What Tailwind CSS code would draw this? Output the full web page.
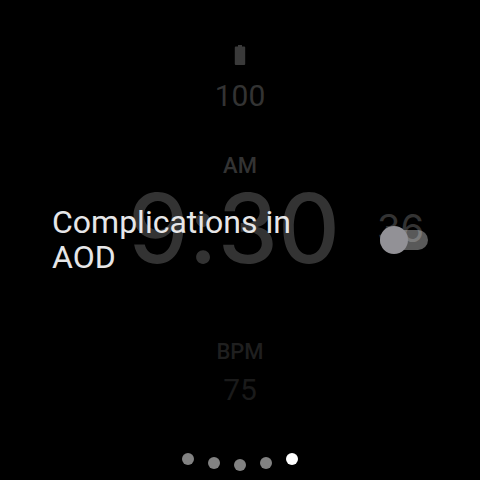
<!DOCTYPE html>
<html lang="en">
<head>
<meta charset="utf-8">
<meta name="viewport" content="width=device-width, initial-scale=1">
<title>Complications in AOD</title>
<script src="https://cdn.jsdelivr.net/npm/@tailwindcss/browser@4"></script>
</head>
<body class="bg-black font-['Roboto',sans-serif]">
<main class="relative flex min-h-screen flex-col overflow-hidden bg-black">
  <!-- Dimmed watch face -->
  <section aria-label="Watch face" class="absolute inset-0 flex flex-col items-center text-[#333]">
    <div class="flex flex-col items-center pt-11">
      <svg class="h-[22px] w-3" viewBox="0 0 12 22" fill="#3a3a3a" aria-hidden="true"><path d="M4 1h4v1.500h2.200a1 1 0 0 1 1 1V20a1 1 0 0 1-1 1H1.800a1 1 0 0 1-1-1V3.500a1 1 0 0 1 1-1H4z"/></svg>
      <span class="mt-3 text-[30px] leading-9">100</span>
    </div>
    <span class="mt-9 text-[22px] leading-8 font-medium">AM</span>
    <div class="grid w-full grid-cols-[1fr_auto_1fr] items-center pr-3 font-['Inter',sans-serif] [font-feature-settings:'calt'_0]">
      <span></span>
      <time class="text-8xl leading-[92px] font-medium">9:30</time>
      <span class="pr-11 text-right text-[38px] leading-10">36</span>
    </div>
    <div class="mt-[62px] flex flex-col items-center">
      <span class="text-[22px] leading-8 font-medium text-[#1f1f1f]">BPM</span>
      <span class="mt-1 text-[30px] leading-9 text-[#1a1a1a]">75</span>
    </div>
  </section>

  <!-- Setting -->
  <label class="relative my-auto flex items-center justify-between pr-13 pl-13">
    <span class="max-w-64 text-[32px] leading-[35px] text-[#e6e6e8]">Complications in AOD</span>
    <span class="relative flex h-7 w-12 items-center">
      <input type="checkbox" role="switch" class="peer h-5 w-12 cursor-pointer appearance-none rounded-full bg-white/35">
      <span class="pointer-events-none absolute left-0 size-7 rounded-full bg-[#929196] peer-checked:left-5"></span>
    </span>
  </label>

  <!-- Page indicator -->
  <nav aria-label="Pages" class="absolute inset-x-0 bottom-2 flex justify-center gap-[14px]">
    <a href="#1" aria-label="Page 1" class="mb-[7px] size-3 rounded-full bg-[#828282]"></a>
    <a href="#2" aria-label="Page 2" class="mt-1 size-3 rounded-full bg-[#828282]"></a>
    <a href="#3" aria-label="Page 3" class="mt-[6px] size-3 rounded-full bg-[#828282]"></a>
    <a href="#4" aria-label="Page 4" class="mt-1 size-3 rounded-full bg-[#828282]"></a>
    <a href="#5" aria-label="Page 5" aria-current="page" class="size-3 rounded-full bg-white"></a>
  </nav>
</main>
</body>
</html>
